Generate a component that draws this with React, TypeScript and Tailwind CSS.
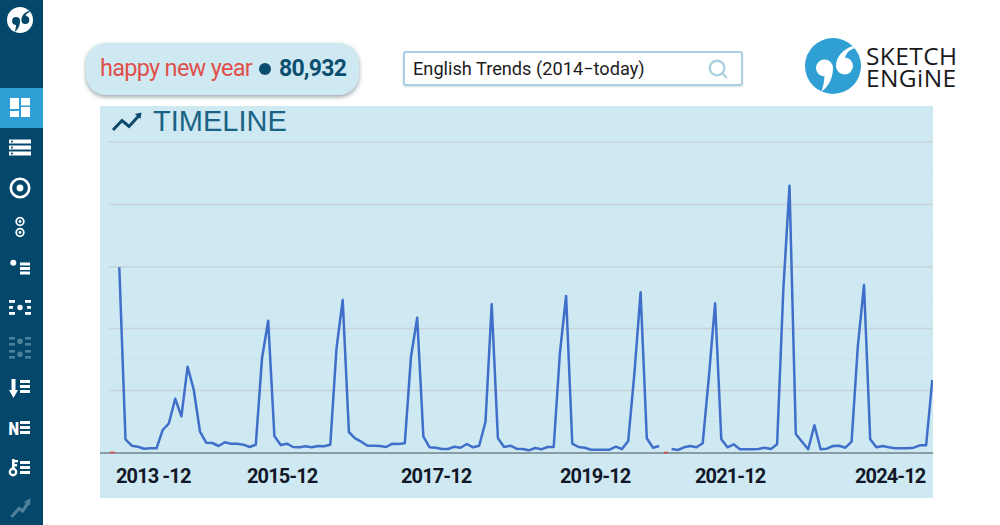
import { Search } from "lucide-react";

const ys = [
  267.3, 439.3, 445.7, 446.7, 448.7, 448.3, 448.3, 430, 423.3, 398.7, 416.3, 366.7, 390, 431.7, 442.7, 443, 446, 442.3, 443.7, 443.7, 444.7, 447, 444.7, 358.3, 320.7, 436, 445, 443.7, 447, 447.3, 446.3, 447.3, 446, 446.3, 444.7, 348.3, 300, 432, 438.3, 441.7, 445.7,
  445.7, 446, 447, 443.7, 444, 443.3, 356.7, 317.7, 436.7, 447.3, 447.7, 449, 449, 446.7, 447.7, 444, 447.3, 445.7, 421.7, 304.3, 438.3, 447, 445.7, 448.7, 449, 450.3, 448, 449.3, 447, 447, 353, 296, 443.7, 447, 447.7, 449.7, 449.7, 449.7, 449.7, 446.7, 449, 441, 373.3, 292.3, 438.3, 447.7, 446,
];
const ys2 = [
  449, 450, 447.3, 446, 447.3, 443.3, 376.7, 303.3, 439.3, 447.3, 444.3, 449.3, 449.3, 449.3, 449, 447.7, 449, 444.3, 290, 185.7, 434, 441.7, 449.3, 425.3, 449.3, 448.7, 446, 445.7, 447.7, 441.7, 346.7, 285, 439.3, 447.3, 446, 447.3, 448.3, 448.3, 448.3, 447.7, 445.3, 445.3, 380,
];
const X0 = 119.3;
const STEP = 6.206;
const line1 = ys.map((y, i) => `${(X0 + i * STEP).toFixed(1)},${y}`).join(" ");
const line2 = ys2.map((y, i) => `${(X0 + (i + 89) * STEP).toFixed(1)},${y}`).join(" ");

const W = "#ffffff";
const FADE = "#4f8099";

function Bars({ x, w, rows, fill = W }: { x: number; w: number; rows: [number, number][]; fill?: string }) {
  return (
    <>
      {rows.map(([y, h], i) => (
        <rect key={i} x={x} y={y} width={w} height={h} fill={fill} />
      ))}
    </>
  );
}

const icons = [
  <>
    <rect x="5" y="5" width="9" height="11" fill={W} />
    <rect x="16" y="5" width="9" height="7.5" fill={W} />
    <rect x="5" y="18" width="9" height="6" fill={W} />
    <rect x="16" y="14" width="9" height="10" fill={W} />
  </>,
  <>
    <Bars x={4} w={22} rows={[[6.5, 4], [12.5, 4], [18.5, 4]]} />
    <circle cx="7" cy="8.5" r="1" fill="#03476a" />
    <circle cx="7" cy="14.5" r="1" fill="#03476a" />
    <circle cx="7" cy="20.5" r="1" fill="#03476a" />
  </>,
  <>
    <circle cx="15" cy="15" r="9.2" fill="none" stroke={W} strokeWidth="2.6" />
    <circle cx="15" cy="15" r="3.4" fill={W} />
  </>,
  <>
    <circle cx="15" cy="8.5" r="3.8" fill="none" stroke={W} strokeWidth="1.8" />
    <circle cx="15" cy="8.5" r="1.4" fill={W} />
    <circle cx="15" cy="19.5" r="3.8" fill="none" stroke={W} strokeWidth="1.8" />
    <circle cx="15" cy="19.5" r="1.4" fill={W} />
  </>,
  <>
    <circle cx="8.3" cy="9.8" r="3" fill={W} />
    <Bars x={15} w={10} rows={[[9.5, 3], [14, 3], [18.5, 3]]} />
  </>,
  <>
    <Bars x={4} w={6} rows={[[7, 2.8], [19, 2.8]]} />
    <rect x="4" y="13" width="4" height="2.8" fill={W} />
    <circle cx="15" cy="14.5" r="2.7" fill={W} />
    <Bars x={20} w={6} rows={[[7, 2.8], [19, 2.8]]} />
    <rect x="22" y="13" width="4" height="2.8" fill={W} />
  </>,
  <>
    {[8, 21].map((c) => (
      <g key={c}>
        <Bars x={4} w={6} rows={[[c - 4, 2.6], [c + 2, 2.6]]} fill={FADE} />
        <circle cx="15" cy={c + 0.3} r="2.8" fill={FADE} />
        <Bars x={20} w={6} rows={[[c - 4, 2.6], [c + 2, 2.6]]} fill={FADE} />
      </g>
    ))}
  </>,
  <>
    <rect x="6.5" y="6" width="4" height="12" fill={W} />
    <polygon points="4,17 13,17 8.5,25" fill={W} />
    <Bars x={15} w={10} rows={[[7, 3], [12, 3], [17, 3]]} />
  </>,
  <>
    <text x="3.5" y="21.5" fontFamily="Roboto" fontWeight="900" fontSize="18" textLength={10.5} lengthAdjust="spacingAndGlyphs" fill={W}>
      N
    </text>
    <Bars x={15} w={10} rows={[[8, 3], [13, 3], [18, 3]]} />
  </>,
  <>
    <circle cx="8" cy="19" r="3.2" fill="none" stroke={W} strokeWidth="2.4" />
    <rect x="7" y="6" width="2.6" height="11" fill={W} />
    <rect x="9" y="7" width="4" height="2.4" fill={W} />
    <rect x="9" y="11" width="3" height="2.4" fill={W} />
    <Bars x={15} w={10} rows={[[8, 3], [13, 3], [18, 3]]} />
  </>,
  <>
    <polyline points="6.5,24 14,15.5 17.5,18 23,10" fill="none" stroke={FADE} strokeWidth="3.2" />
    <polygon points="19,9 25.5,5 25,12.5" fill={FADE} />
  </>,
];

function Mark({ bg, fg, size }: { bg: string; fg: string; size: number }) {
  return (
    <svg width={size} height={size} viewBox="0 0 56 56" className="shrink-0">
      <circle cx="28" cy="28" r="28" fill={bg} />
      <path d="M11 30 A8.5 8.5 0 1 1 28 30 C28 41 23 49 16 54 C18 50 19 45 19.5 38.5 A8.5 8.5 0 0 1 11 30 Z" fill={fg} />
      <path d="M48 8 C38 11 31 19 31 28 A8.5 8.5 0 1 0 40 19.5 C41.5 15 44 12 49 10.5 Z" fill={fg} />
    </svg>
  );
}

export default function App() {
  return (
    <div className="flex w-[1000px] h-[525px] overflow-hidden bg-white font-[Roboto,sans-serif]">
      <aside className="w-[43px] shrink-0 h-full overflow-hidden bg-[#03476a] flex flex-col">
        <div className="h-[88px] shrink-0 pt-[7px] pl-[7px]">
          <Mark bg="#ffffff" fg="#03476a" size={26} />
        </div>
        {icons.map((ic, i) => (
          <div key={i} className={`h-10 shrink-0 flex items-center pl-[5px] ${i === 0 ? "bg-[#2f9fd4]" : ""}`}>
            <svg width="30" height="30" viewBox="0 0 30 30">
              {ic}
            </svg>
          </div>
        ))}
      </aside>

      <main className="flex-1 flex flex-col">
        <header className="h-[106px] shrink-0 relative flex items-start pl-[43px] pt-[38px]">
          <div className="mt-[5px] w-[273px] h-[52px] rounded-[20px] bg-[#cfe9f3] shadow-[0_2px_4px_rgba(70,90,100,0.55)] flex items-center pl-[14px] whitespace-nowrap">
            <span className="text-[23.5px] text-[#e0504a] tracking-[-0.72px]">happy new year</span>
            <span className="ml-[7px] w-[12px] h-[12px] rounded-full bg-[#0b4f70]" />
            <span className="ml-[8px] text-[23px] font-bold text-[#0b4f70] tracking-[-0.75px]">80,932</span>
          </div>
          <div className="ml-[44px] mt-[13px] w-[340px] h-[35px] border-2 border-[#a8d0e0] rounded-[3px] flex items-center justify-between pl-[8px] pr-[12px] shadow-[0_1px_2px_rgba(120,150,160,0.3)]">
            <span className="text-[18.2px] text-[#1c1c1c] whitespace-nowrap">English Trends (2014−today)</span>
            <Search size={22} strokeWidth={2.5} className="text-[#a9d0e0]" />
          </div>
          <div className="ml-[62px] flex items-center">
            <Mark bg="#2f9fd4" fg="#ffffff" size={56} />
            <div className="ml-[5px] mt-[1px] flex flex-col font-['Open_Sans',sans-serif] font-medium text-[24.5px] leading-[22px] text-[#1a1a1c] tracking-[0.4px]">
              <span>SKETCH</span>
              <span>ENGiNE</span>
            </div>
          </div>
        </header>

        <section className="ml-[57px] w-[833px] h-[392px] bg-[#cfe9f3] flex flex-col">
          <div className="h-[34px] shrink-0 flex items-center pl-[11px] pb-[3px]">
            <svg width="32" height="22" viewBox="0 0 32 22">
              <path d="M2 19 L11 9.5 L18 15.5 L29 3.5" fill="none" stroke="#0b4a6b" strokeWidth="3" />
              <path d="M24 3 L30.5 1.5 L29.5 8" fill="#0b4a6b" />
            </svg>
            <span className="ml-[10px] font-['Liberation_Sans',sans-serif] text-[29px] leading-none text-[#1a6385]">TIMELINE</span>
          </div>
          <svg width="833" height="320" viewBox="100 140 833 320" className="shrink-0 block">
            {[173, 235, 297, 359.5, 421.5].map((y) => (
              <line key={y} x1="109" x2="933" y1={y} y2={y} stroke="#cbe3ec" strokeWidth="1" />
            ))}
            {[142, 204.5, 266.7, 328.4, 390.6].map((y) => (
              <line key={y} x1="109" x2="933" y1={y} y2={y} stroke="#c7d3d8" strokeWidth="1.5" />
            ))}
            <line x1="100" x2="933" y1="453" y2="453" stroke="#6f8289" strokeWidth="1.5" />
            <line x1="110" x2="115" y1="452.5" y2="452.5" stroke="#e0473e" strokeWidth="1.5" />
            <line x1="664" x2="668" y1="452.5" y2="452.5" stroke="#e0473e" strokeWidth="1.5" />
            <polyline points={line1} fill="none" stroke="#3f6fc9" strokeWidth="2.5" strokeLinejoin="round" />
            <polyline points={line2} fill="none" stroke="#3f6fc9" strokeWidth="2.5" strokeLinejoin="round" />
          </svg>
          <div className="flex-1 flex items-center pb-[6px] text-[20px] font-bold text-[#111827] whitespace-nowrap tracking-[-0.9px]">
            <span className="ml-[16px] w-[131px]">2013 -12</span>
            <span className="w-[154px]">2015-12</span>
            <span className="w-[159px]">2017-12</span>
            <span className="w-[135px]">2019-12</span>
            <span className="w-[160px]">2021-12</span>
            <span>2024-12</span>
          </div>
        </section>
      </main>
    </div>
  );
}
